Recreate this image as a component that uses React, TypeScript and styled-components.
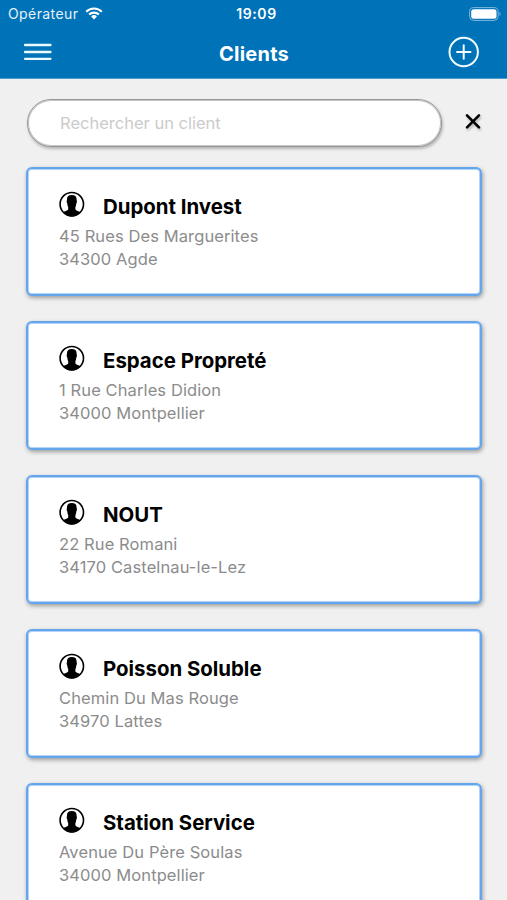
import React, { useState } from 'react';
import styled, { createGlobalStyle } from 'styled-components';

const GlobalStyle = createGlobalStyle`
  * {
    box-sizing: border-box;
  }

  body {
    margin: 0;
    background: #f0f0f0;
    font-family: Inter, 'Liberation Sans', sans-serif;
  }
`;

const Screen = styled.div`
  display: flex;
  flex-direction: column;
  height: 100vh;
  overflow: hidden;
  background: #f0f0f0;
`;

const Header = styled.header`
  flex-shrink: 0;
  height: 79px;
  background: #0072b8;
  border-bottom: 1px solid #4d9ccd;
  color: #fff;
`;

const StatusBar = styled.div`
  display: grid;
  grid-template-columns: 1fr auto 1fr;
  align-items: center;
  height: 27px;
  padding: 0 5px 0 8px;
`;

const Carrier = styled.div`
  display: flex;
  align-items: center;
  gap: 7px;
  font-size: 14px;
  letter-spacing: 0.4px;
  color: #e4f2fa;
`;

const Clock = styled.div`
  margin-left: 3px;
  font-size: 14px;
  font-weight: 600;
  letter-spacing: 0.6px;
`;

const Battery = styled.svg`
  justify-self: end;
`;

const NavBar = styled.div`
  display: grid;
  grid-template-columns: 1fr auto 1fr;
  align-items: center;
  height: 50px;
  padding: 0 27px 0 23px;
`;

const Title = styled.h1`
  margin: 4px 0 0 5px;
  font-size: 20px;
  font-weight: 700;
  line-height: 24px;
  letter-spacing: 0.25px;
`;

const IconButton = styled.button<{ $end?: boolean }>`
  display: flex;
  justify-self: ${props => props.$end ? 'end' : 'start'};
  padding: 0;
  border: none;
  background: none;
  color: inherit;
  cursor: pointer;
`;

const SearchRow = styled.div`
  display: flex;
  flex-shrink: 0;
  align-items: center;
  gap: 22px;
  padding: 20px 25px 0 27px;
`;

const SearchInput = styled.input`
  width: 416px;
  height: 48px;
  padding: 0 32px 1px;
  border: 1px solid #979797;
  border-radius: 24px;
  outline: none;
  background: #fff;
  box-shadow: inset 0 0 0 1px #c4c4c4, 1px 2px 3px rgba(0, 0, 0, 0.25);
  font-family: inherit;
  font-size: 16.5px;
  color: #000;

  &::placeholder {
    color: #cbcbcb;
    opacity: 1;
  }
`;

const ClearIcon = styled.svg`
  filter: drop-shadow(1px 2px 1px rgba(0, 0, 0, 0.25));
`;

const ClientList = styled.div`
  display: flex;
  flex-direction: column;
  gap: 25px;
  padding: 20px 25px 0 26px;
`;

const Card = styled.div`
  flex-shrink: 0;
  height: 129px;
  padding: 22px 31px 0;
  border: 2px solid #64a6ee;
  border-radius: 6px;
  background: #fff;
  box-shadow: inset 0 0 0 1px #b3d4f8, 1px 2px 4px rgba(0, 0, 0, 0.35);
`;

const CardHeader = styled.div`
  display: flex;
  gap: 18px;
  height: 34px;
`;

const ClientName = styled.h2`
  margin: 3px 0 0;
  font-size: 20.4px;
  font-weight: 700;
  line-height: 25px;
  white-space: nowrap;
`;

const Address = styled.p`
  margin: 0;
  font-size: 16.5px;
  line-height: 23px;
  letter-spacing: 0.1px;
  color: #8c8c8c;
  white-space: nowrap;
`;

interface Client {
  name: string;
  street: string;
  city: string;
}

const clients: Client[] = [
  { name: 'Dupont Invest', street: '45 Rues Des Marguerites', city: '34300 Agde' },
  { name: 'Espace Propreté', street: '1 Rue Charles Didion', city: '34000 Montpellier' },
  { name: 'NOUT', street: '22 Rue Romani', city: '34170 Castelnau-le-Lez' },
  { name: 'Poisson Soluble', street: 'Chemin Du Mas Rouge', city: '34970 Lattes' },
  { name: 'Station Service', street: 'Avenue Du Père Soulas', city: '34000 Montpellier' },
];

const WifiIcon = () => (
  <svg width="18" height="13" viewBox="0 0 18 13" fill="none" stroke="#fff" strokeWidth="2.1">
    <path d="M1.2 4.7a11 11 0 0 1 15.6 0" />
    <path d="M4.1 7.6a7 7 0 0 1 9.8 0" />
    <path d="M9 12.4 6.1 9.5a4.1 4.1 0 0 1 5.8 0Z" fill="#fff" stroke="none" />
  </svg>
);

const UserIcon = () => (
  <svg width="26" height="26" viewBox="0 0 26 26">
    <circle cx="12.8" cy="13.2" r="11.7" fill="#fff" stroke="#000" strokeWidth="1.6" />
    <path d="M12.8 4C9.2 4 7.7 5.6 8 9.300c-.6.500-.4 2.300.3 3.100.2 1.800.4 2.800.9 3.500v2.700c-.6 1.300-3.500 1.400-5.300 2.900a12 12 0 0 0 17.800 0c-1.800-1.500-4.700-1.600-5.300-2.900v-2.700c.5-.7.7-1.700.9-3.500.7-.8.9-2.600.3-3.100.3-3.700-1.200-5.300-4.800-5.300Z" />
  </svg>
);

const ClientCard: React.FC<{ client: Client }> = ({ client }) => (
  <Card>
    <CardHeader>
      <UserIcon />
      <ClientName>{client.name}</ClientName>
    </CardHeader>
    <Address>{client.street}</Address>
    <Address>{client.city}</Address>
  </Card>
);

const App: React.FC = () => {
  const [search, setSearch] = useState('');

  const visibleClients = clients.filter(client =>
    client.name.toLowerCase().includes(search.toLowerCase())
  );

  return (
    <Screen>
      <GlobalStyle />
      <Header>
        <StatusBar>
          <Carrier>
            Opérateur
            <WifiIcon />
          </Carrier>
          <Clock>19:09</Clock>
          <Battery width="33" height="14" viewBox="0 0 33 14">
            <rect x="0.6" y="0.6" width="28.5" height="12.8" rx="4" fill="none" stroke="#7fb8dc" />
            <rect x="2.2" y="2.2" width="25.3" height="9.6" rx="2.5" fill="#fff" />
            <path d="M30.5 5v4c1.5-.5 1.5-3.5 0-4Z" fill="#7fb8dc" />
          </Battery>
        </StatusBar>
        <NavBar>
          <IconButton>
            <svg width="30" height="20" viewBox="0 0 30 20" stroke="#e9fbff" strokeWidth="2.3" strokeLinecap="round">
              <path d="M2 3h25.500M2 10h25.500M2 16.800h25.500" />
            </svg>
          </IconButton>
          <Title>Clients</Title>
          <IconButton $end>
            <svg width="32" height="32" viewBox="0 0 32 32" fill="none" stroke="#f0fcff" strokeWidth="2" strokeLinecap="round">
              <circle cx="15.7" cy="16" r="14.2" />
              <path d="M9 16h13.500M15.700 9.300v13.500" />
            </svg>
          </IconButton>
        </NavBar>
      </Header>

      <SearchRow>
        <SearchInput
          placeholder="Rechercher un client"
          value={search}
          onChange={event => setSearch(event.target.value)}
        />
        <IconButton onClick={() => setSearch('')}>
          <ClearIcon width="18" height="20" viewBox="0 0 18 20" stroke="#000" strokeWidth="2.6" strokeLinecap="round">
            <path d="M3 2.300 15 14.300M15 2.300 3 14.300" />
          </ClearIcon>
        </IconButton>
      </SearchRow>

      <ClientList>
        {visibleClients.map(client => (
          <ClientCard key={client.name} client={client} />
        ))}
      </ClientList>
    </Screen>
  );
};

export default App;
